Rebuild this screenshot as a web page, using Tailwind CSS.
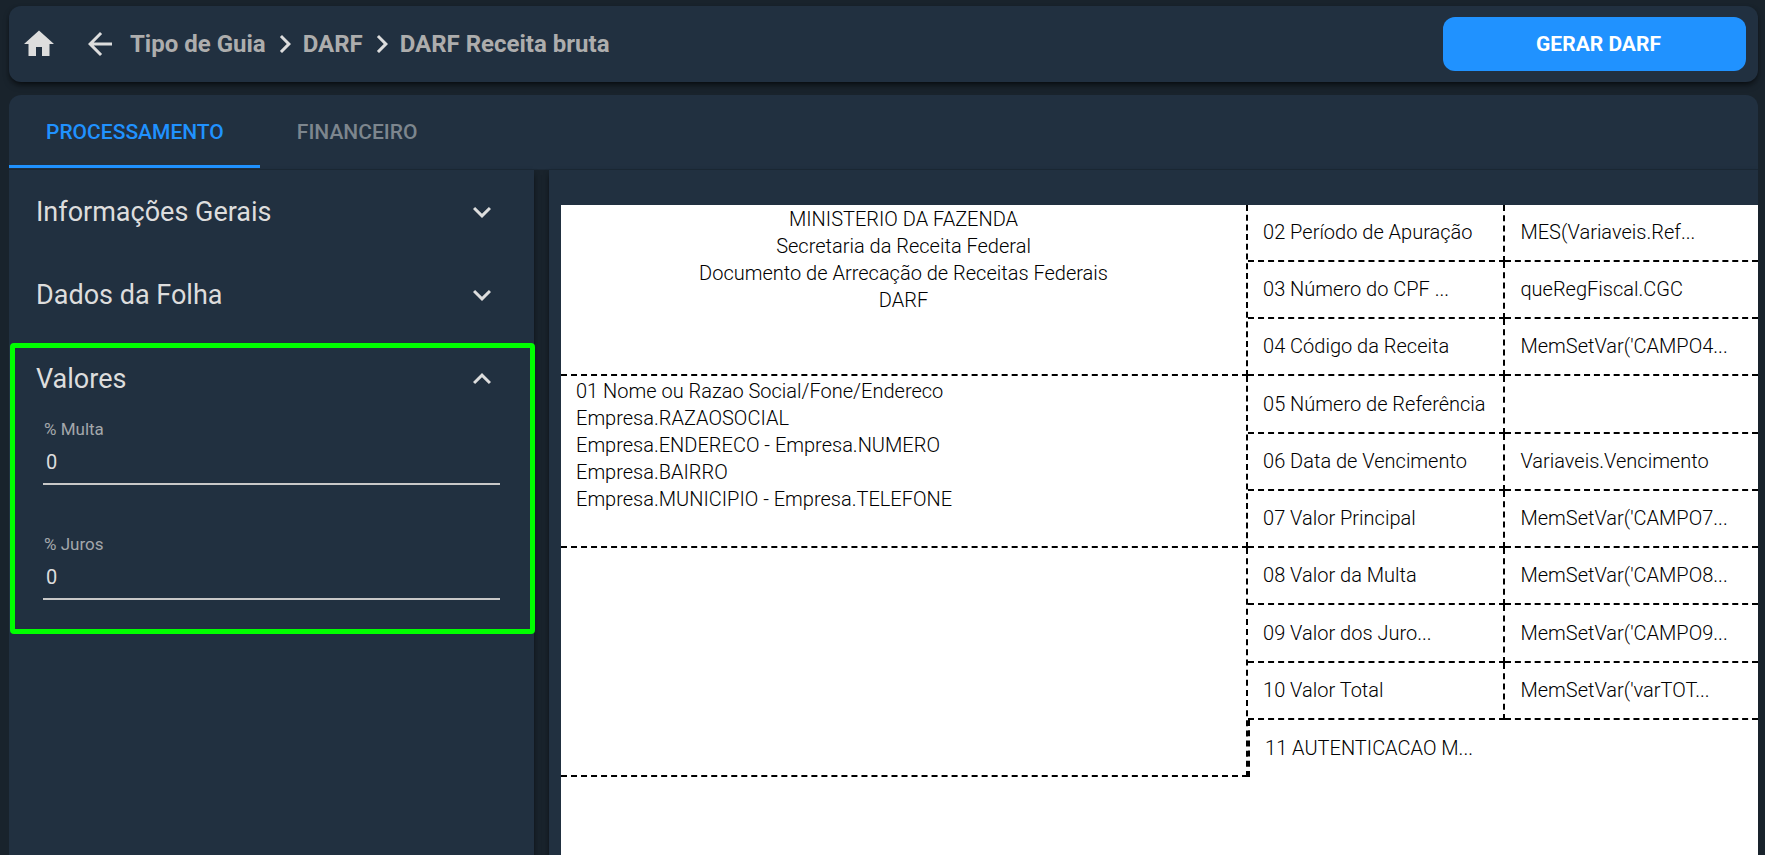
<!DOCTYPE html>
<html lang="pt-BR">
<head>
  <meta charset="UTF-8">
  <meta name="viewport" content="width=device-width, initial-scale=1.0">
  <title>DARF Receita bruta</title>
  <script src="https://cdn.jsdelivr.net/npm/@tailwindcss/browser@4"></script>
</head>
<body class="flex min-h-screen flex-col bg-[#19232c] pt-[6px] pl-[9px] pr-[7px] font-['Roboto',sans-serif] text-[#dddddd]">
  <!-- Header -->
  <header class="flex h-[76px] shrink-0 items-center justify-between rounded-xl bg-[#213040] px-3 shadow-md shadow-black/50">
    <nav class="flex items-center text-[24px] font-bold text-[#adadad]" aria-label="Navegação">
      <a href="#" class="text-[#dddddd]" aria-label="Início">
        <svg class="size-9" viewBox="0 0 24 24" fill="currentColor"><path d="M10 20v-6h4v6h5v-8h3L12 3 2 12h3v8z"/></svg>
      </a>
      <a href="#" class="ml-[25px] text-[#dddddd]" aria-label="Voltar">
        <svg class="size-9" viewBox="0 0 24 24" fill="currentColor"><path d="M20 11H7.83l5.59-5.59L12 4l-8 8 8 8 1.41-1.41L7.83 13H20v-2z"/></svg>
      </a>
      <a href="#" class="ml-3">Tipo de Guia</a>
      <svg class="ml-px size-9 text-[#dddddd]" viewBox="0 0 24 24" fill="currentColor"><path d="M10 6 8.59 7.41 13.17 12l-4.58 4.59L10 18l6-6z"/></svg>
      <a href="#">DARF</a>
      <svg class="ml-px size-9 text-[#dddddd]" viewBox="0 0 24 24" fill="currentColor"><path d="M10 6 8.59 7.41 13.17 12l-4.58 4.59L10 18l6-6z"/></svg>
      <span>DARF Receita bruta</span>
    </nav>
    <button type="button" class="h-[54px] w-[303px] rounded-xl bg-[#2092ff] pt-0.5 pl-2 text-[21px] font-bold text-white">GERAR DARF</button>
  </header>

  <main class="mt-[13px] flex flex-1 flex-col overflow-hidden rounded-t-xl">
    <!-- Tabs -->
    <div class="flex h-[75px] shrink-0 border-b border-[#1c2936] bg-[#213040] text-[21px] font-medium" role="tablist">
      <button type="button" role="tab" aria-selected="true" class="h-[73px] border-b-[3px] border-[#2092ff] pt-[5px] pr-9 pl-[37px] text-[#2092ff]">PROCESSAMENTO</button>
      <button type="button" role="tab" aria-selected="false" class="h-[73px] pt-0.5 pr-9 pl-[37px] text-[#7d868e]">FINANCEIRO</button>
    </div>

    <div class="flex flex-1">
      <!-- Side panel -->
      <aside class="w-[525px] shrink-0 bg-[#213040] shadow-md shadow-black/50">
        <button type="button" class="flex h-[83px] w-full items-center justify-between pl-[27px] pr-[34px] text-[27px]">
          <span class="pt-0.5">Informações Gerais</span>
          <svg class="size-9" viewBox="0 0 24 24" fill="currentColor"><path d="M16.59 8.59 12 13.17 7.41 8.59 6 10l6 6 6-6z"/></svg>
        </button>
        <button type="button" class="flex h-[83px] w-full items-center justify-between pl-[27px] pr-[34px] text-[27px]">
          <span class="pt-0.5">Dados da Folha</span>
          <svg class="size-9" viewBox="0 0 24 24" fill="currentColor"><path d="M16.59 8.59 12 13.17 7.41 8.59 6 10l6 6 6-6z"/></svg>
        </button>
        <section class="relative pb-[34px]">
          <div class="pointer-events-none absolute top-[7px] right-[-1px] bottom-0 left-[1px] rounded-[4px] border-5 border-[#00ff00]"></div>
          <button type="button" aria-expanded="true" class="flex h-[83px] w-full items-center justify-between pt-0.5 pl-[27px] pr-[34px] text-[27px]">
            <span class="pt-0.5">Valores</span>
            <svg class="size-9" viewBox="0 0 24 24" fill="currentColor"><path d="m12 8-6 6 1.41 1.41L12 10.83l4.59 4.58L18 14z"/></svg>
          </button>
          <div class="flex flex-col gap-[49px] px-[34px]">
            <div class="flex flex-col">
              <label for="multa" class="pb-0.5 pl-px text-[17px] leading-[20px] text-[#a3a7ab]">% Multa</label>
              <input id="multa" type="text" value="0" class="h-[44px] border-b-2 border-[#c8c8c8] px-[3px] text-[20px] outline-none">
            </div>
            <div class="flex flex-col">
              <label for="juros" class="pb-0.5 pl-px text-[17px] leading-[20px] text-[#a3a7ab]">% Juros</label>
              <input id="juros" type="text" value="0" class="h-[44px] border-b-2 border-[#c8c8c8] px-[3px] text-[20px] outline-none">
            </div>
          </div>
        </section>
      </aside>

      <!-- Document preview -->
      <section class="ml-[15px] flex flex-1 bg-[#213040] pt-[35px] pl-3 shadow-md shadow-black/50">
        <div class="flex-1 bg-white">
          <table class="w-full table-fixed border-separate border-spacing-0 text-left text-[20px] leading-[27px] font-light text-black">
            <colgroup>
              <col class="w-[57.4%]">
              <col class="w-[21.5%]">
              <col>
            </colgroup>
            <tbody>
              <tr class="h-[57px]">
                <td rowspan="3" class="border-r-2 border-b-2 border-dashed border-black px-[15px] pt-px text-center align-top">MINISTERIO DA FAZENDA<br>Secretaria da Receita Federal<br>Documento de Arrecação de Receitas Federais<br>DARF</td>
                <td class="border-r-2 border-b-2 border-dashed border-black pl-[15px] whitespace-nowrap">02 Período de Apuração</td>
                <td class="border-b-2 border-dashed border-black pl-[15px] whitespace-nowrap">MES(Variaveis.Ref...</td>
              </tr>
              <tr class="h-[57px]">
                <td class="border-r-2 border-b-2 border-dashed border-black pl-[15px] whitespace-nowrap">03 Número do CPF ...</td>
                <td class="border-b-2 border-dashed border-black pl-[15px] whitespace-nowrap">queRegFiscal.CGC</td>
              </tr>
              <tr class="h-[57px]">
                <td class="border-r-2 border-b-2 border-dashed border-black pl-[15px] whitespace-nowrap">04 Código da Receita</td>
                <td class="border-b-2 border-dashed border-black pl-[15px] whitespace-nowrap">MemSetVar('CAMPO4...</td>
              </tr>
              <tr class="h-[58px]">
                <td rowspan="3" class="border-r-2 border-b-2 border-dashed border-black px-[15px] pt-0.5 align-top">01 Nome ou Razao Social/Fone/Endereco<br>Empresa.RAZAOSOCIAL<br>Empresa.ENDERECO - Empresa.NUMERO<br>Empresa.BAIRRO<br>Empresa.MUNICIPIO - Empresa.TELEFONE</td>
                <td class="border-r-2 border-b-2 border-dashed border-black pl-[15px] whitespace-nowrap">05 Número de Referência</td>
                <td class="border-b-2 border-dashed border-black pl-[15px] whitespace-nowrap"></td>
              </tr>
              <tr class="h-[57px]">
                <td class="border-r-2 border-b-2 border-dashed border-black pl-[15px] whitespace-nowrap">06 Data de Vencimento</td>
                <td class="border-b-2 border-dashed border-black pl-[15px] whitespace-nowrap">Variaveis.Vencimento</td>
              </tr>
              <tr class="h-[57px]">
                <td class="border-r-2 border-b-2 border-dashed border-black pl-[15px] whitespace-nowrap">07 Valor Principal</td>
                <td class="border-b-2 border-dashed border-black pl-[15px] whitespace-nowrap">MemSetVar('CAMPO7...</td>
              </tr>
              <tr class="h-[57px]">
                <td rowspan="4" class="border-r-2 border-b-2 border-dashed border-black"></td>
                <td class="border-r-2 border-b-2 border-dashed border-black pl-[15px] whitespace-nowrap">08 Valor da Multa</td>
                <td class="border-b-2 border-dashed border-black pl-[15px] whitespace-nowrap">MemSetVar('CAMPO8...</td>
              </tr>
              <tr class="h-[58px]">
                <td class="border-r-2 border-b-2 border-dashed border-black pl-[15px] whitespace-nowrap">09 Valor dos Juro...</td>
                <td class="border-b-2 border-dashed border-black pl-[15px] whitespace-nowrap">MemSetVar('CAMPO9...</td>
              </tr>
              <tr class="h-[57px]">
                <td class="border-r-2 border-b-2 border-dashed border-black pl-[15px] whitespace-nowrap">10 Valor Total</td>
                <td class="border-b-2 border-dashed border-black pl-[15px] whitespace-nowrap">MemSetVar('varTOT...</td>
              </tr>
              <tr class="h-[57px]">
                <td colspan="2" class="border-l-2 border-dashed border-black pl-[15px] whitespace-nowrap">11 AUTENTICACAO M...</td>
              </tr>
            </tbody>
          </table>
        </div>
      </section>
    </div>
  </main>
</body>
</html>
